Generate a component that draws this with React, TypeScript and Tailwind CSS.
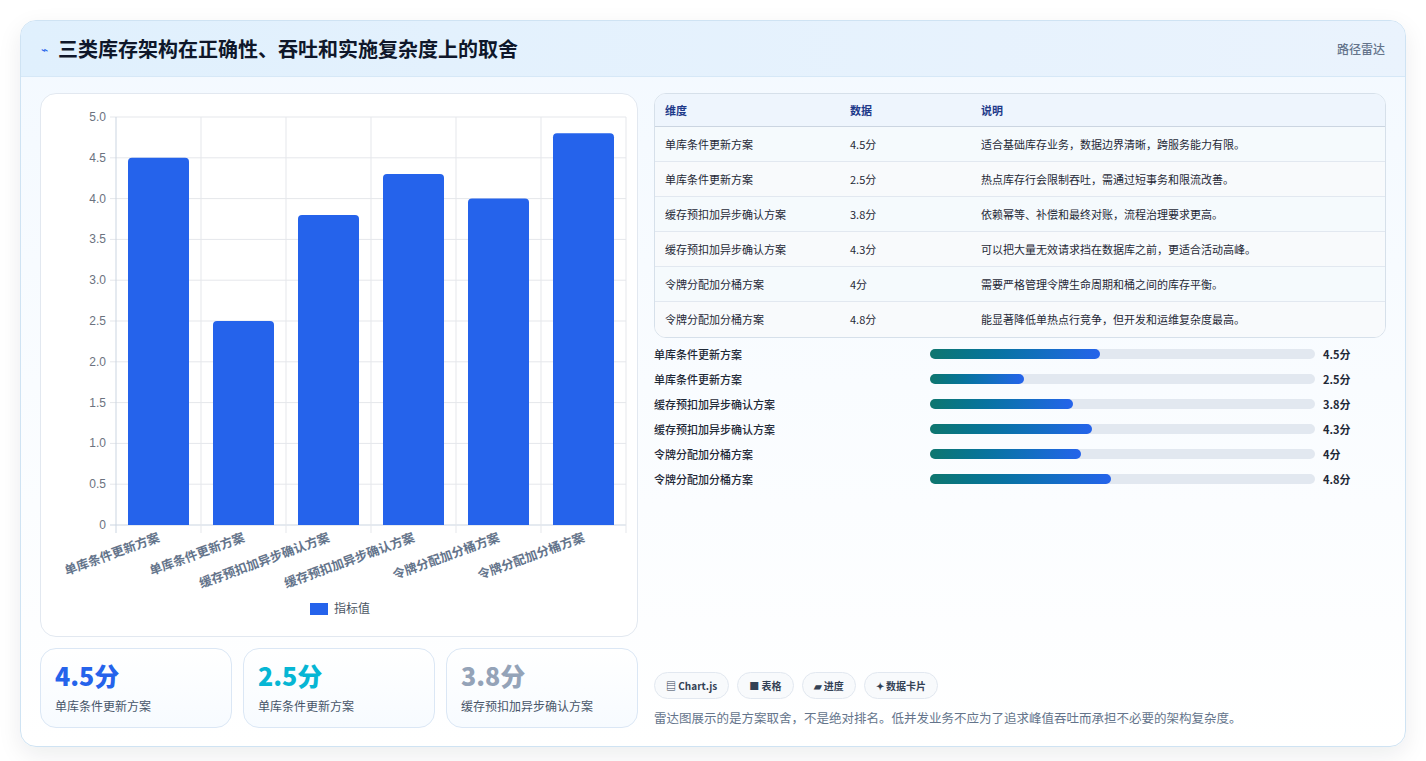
import React from "react";

const ROWS = [
  { name: "单库条件更新方案", v: 4.5, note: "适合基础库存业务，数据边界清晰，跨服务能力有限。" },
  { name: "单库条件更新方案", v: 2.5, note: "热点库存行会限制吞吐，需通过短事务和限流改善。" },
  { name: "缓存预扣加异步确认方案", v: 3.8, note: "依赖幂等、补偿和最终对账，流程治理要求更高。" },
  { name: "缓存预扣加异步确认方案", v: 4.3, note: "可以把大量无效请求挡在数据库之前，更适合活动高峰。" },
  { name: "令牌分配加分桶方案", v: 4, note: "需要严格管理令牌生命周期和桶之间的库存平衡。" },
  { name: "令牌分配加分桶方案", v: 4.8, note: "能显著降低单热点行竞争，但开发和运维复杂度最高。" },
];

const L = 75, R = 585, T = 23, B = 431;
const CW = (R - L) / 6;
const yOf = (v: number) => B - (v / 5) * (B - T);

function BarChart() {
  const ticks = [0, 0.5, 1, 1.5, 2, 2.5, 3, 3.5, 4, 4.5, 5];
  return (
    <svg width="598" height="544" className="block" style={{ fontFamily: "'Liberation Sans','Noto Sans CJK SC',sans-serif" }}>
      {ticks.map((t) => (
        <g key={t}>
          <line x1={L - 6} x2={R} y1={yOf(t)} y2={yOf(t)} stroke={t === 0 ? "#cbd5e1" : "#e5e7eb"} />
          <text x={L - 10} y={yOf(t) + 4} fontSize="12" fill="#6b7280" textAnchor="end">
            {t === 0 ? "0" : t.toFixed(1)}
          </text>
        </g>
      ))}
      {Array.from({ length: 7 }).map((_, i) => (
        <line key={i} x1={L + i * CW} x2={L + i * CW} y1={T} y2={B + 8} stroke={i === 0 ? "#cbd5e1" : "#e5e7eb"} />
      ))}
      {ROWS.map((r, i) => {
        const cx = L + i * CW + CW / 2;
        return (
          <g key={i}>
            <path
              d={`M${cx - 30.5} ${B} V${yOf(r.v) + 4} Q${cx - 30.5} ${yOf(r.v)} ${cx - 26.5} ${yOf(r.v)} H${cx + 26.5} Q${cx + 30.5} ${yOf(r.v)} ${cx + 30.5} ${yOf(r.v) + 4} V${B} Z`}
              fill="#2563eb"
            />
            <text
              x={cx + 2}
              y={B + 16}
              fontSize="12.5"
              fontWeight="700"
              fill="#64748b"
              textAnchor="end"
              transform={`rotate(-20 ${cx + 2} ${B + 16})`}
            >
              {r.name}
            </text>
          </g>
        );
      })}
      <rect x="269" y="509" width="18" height="12" fill="#2563eb" />
      <text x="293" y="519" fontSize="12" fill="#4b5563">指标值</text>
    </svg>
  );
}

function Stat({ v, label, color }: { v: string; label: string; color: string }) {
  return (
    <div className="flex-1 rounded-2xl border border-[#dbe7f5] bg-gradient-to-b from-white to-[#f7fbff] px-[14px] pt-[10px] pb-[12px]">
      <div className={`text-[25px] font-extrabold leading-[32px] ${color}`}>{v}</div>
      <div className="mt-[6px] text-[12px] text-[#475569]">{label}</div>
    </div>
  );
}

export default function App() {
  return (
    <div className="min-h-[761px] bg-white p-[20px]" style={{ fontFamily: "'Noto Sans CJK SC','Noto Sans',sans-serif" }}>
      <div className="overflow-hidden rounded-2xl border border-[#cfe3f3] bg-gradient-to-b from-[#f3f9ff] to-white shadow-[0_8px_24px_rgba(15,23,42,0.08)]">
        <div className="flex h-[56px] items-center justify-between border-b border-[#d6e8f7] bg-gradient-to-r from-[#e0f0fd] to-[#eaf3fd] px-[20px]">
          <div className="flex items-center gap-[10px]">
            <span className="text-[12px] text-[#2563eb]">⌁</span>
            <span className="text-[20px] font-bold text-[#0f172a]">三类库存架构在正确性、吞吐和实施复杂度上的取舍</span>
          </div>
          <span className="text-[12px] font-medium text-[#64748b]">路径雷达</span>
        </div>
        <div className="flex gap-[16px] px-[19px] pt-[16px] pb-[18px]">
          <div className="flex w-[598px] flex-col gap-[11px]">
            <div className="h-[544px] rounded-2xl border border-[#e2e8f0] bg-white">
              <BarChart />
            </div>
            <div className="flex gap-[11px]">
              <Stat v="4.5分" label="单库条件更新方案" color="text-[#2563eb]" />
              <Stat v="2.5分" label="单库条件更新方案" color="text-[#06b6d4]" />
              <Stat v="3.8分" label="缓存预扣加异步确认方案" color="text-[#94a3b8]" />
            </div>
          </div>
          <div className="flex flex-1 flex-col">
            <div className="overflow-hidden rounded-xl border border-[#d6e0ea] bg-white">
              <div className="grid h-[33px] grid-cols-[185px_131px_1fr] items-center border-b border-[#cbd5e1] bg-[#eef5fd] px-[10px] text-[11px] font-bold text-[#1e3a8a]">
                <span>维度</span><span>数据</span><span>说明</span>
              </div>
              {ROWS.map((r, i) => (
                <div key={i} className={`grid h-[35px] grid-cols-[185px_131px_1fr] items-center px-[10px] text-[11px] text-[#1f2937] ${i < 5 ? "border-b border-[#e2e8f0]" : ""} ${i % 2 ? "bg-[#f8fafc]" : "bg-[#f5fafd]"}`}>
                  <span>{r.name}</span><span>{r.v}分</span><span>{r.note}</span>
                </div>
              ))}
            </div>
            <div className="mt-[8px] flex flex-col gap-[9px]">
              {ROWS.map((r, i) => (
                <div key={i} className="flex h-[16px] items-center text-[11px] font-medium text-[#1f2937]">
                  <span className="w-[276px]">{r.name}</span>
                  <div className="h-[10px] w-[385px] rounded-full bg-[#e2e8f0]">
                    <div className="h-full rounded-full bg-gradient-to-r from-[#0f766e] to-[#2563eb]" style={{ width: `${r.v * 9.8}%` }} />
                  </div>
                  <span className="ml-[8px] font-bold">{r.v}分</span>
                </div>
              ))}
            </div>
            <div className="mt-auto flex gap-[8px]">
              {["▤ Chart.js", "■ 表格", "▰ 进度", "✦ 数据卡片"].map((t) => (
                <span key={t} className="rounded-full border border-[#e2e8f0] bg-[#f8fafc] px-[11px] py-[5px] text-[10px] font-bold text-[#334155]">{t}</span>
              ))}
            </div>
            <p className="mt-[10px] text-[12.5px] text-[#64748b]">雷达图展示的是方案取舍，不是绝对排名。低并发业务不应为了追求峰值吞吐而承担不必要的架构复杂度。</p>
          </div>
        </div>
      </div>
    </div>
  );
}
